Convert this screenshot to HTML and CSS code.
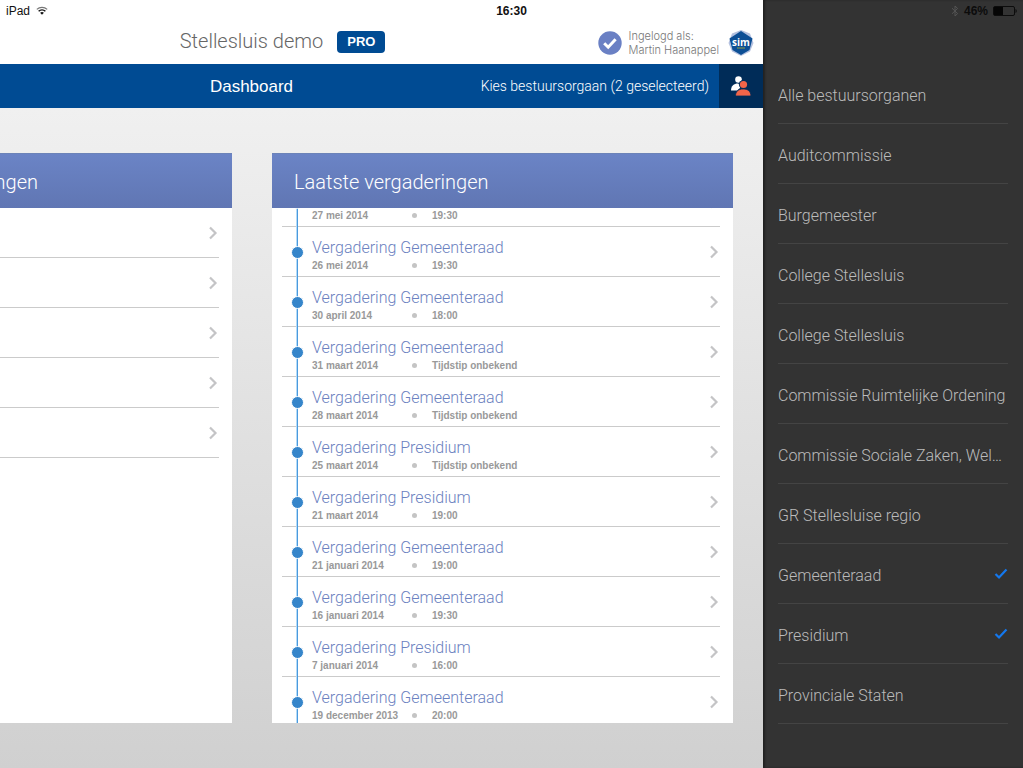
FILE: index.html
```html
<!DOCTYPE html>
<html lang="nl">
<head>
<meta charset="utf-8">
<title>Stellesluis demo – Dashboard</title>
<link rel="stylesheet" href="styles.css">
</head>
<body>
<svg width="0" height="0" class="sprite" aria-hidden="true">
  <symbol id="chevron" viewBox="0 0 10 14"><path d="M2 1.5 7.5 7 2 12.5" fill="none" stroke="#c4c4c6" stroke-width="2.2"/></symbol>
</svg>
<div class="statusbar">
  <span class="device">iPad
    <svg width="12" height="9" viewBox="0 0 12 9" fill="none" stroke="#111"><path d="M.8 3.4a7.6 7.6 0 0 1 10.4 0" stroke-width="1.2" stroke="#777"/><path d="M2.6 5.3a5 5 0 0 1 6.8 0" stroke-width="1.5"/><path d="M6 8.8 4.1 6.8a2.8 2.8 0 0 1 3.8 0z" fill="#111" stroke="none"/></svg>
  </span>
  <span class="clock">16:30</span>
  <span class="power">
    <svg width="8" height="12" viewBox="0 0 8 12" fill="none" stroke="#555" stroke-width="1"><path d="M1 3.2 6.6 8.6 4 11V1l2.6 2.4L1 8.8"/></svg>
    46%
    <svg width="24" height="10" viewBox="0 0 24 10"><rect x=".5" y=".5" width="21" height="9" rx="1.5" fill="none" stroke="#0c0c0c"/><path d="M1 1h9v8H1z" fill="#050505"/><path d="M22.5 3c1.6.6 1.6 3.4 0 4z" fill="#0c0c0c"/></svg>
  </span>
</div>
<div class="app">
  <div class="viewport">
    <div class="view">
      <header class="header">
        <span></span>
        <h1 class="title">Stellesluis demo</h1>
        <div class="header-end">
          <span class="badge">PRO</span>
          <div class="user">
            <svg width="24" height="24" viewBox="0 0 24 24"><circle cx="12" cy="12" r="11.7" fill="#6a80c4"/><path d="m6.2 12.2 4 4 7.4-8" fill="none" stroke="#fff" stroke-width="3"/></svg>
            <p class="user-name">Ingelogd als:<br>Martin Haanappel</p>
            <svg class="logo" width="26" height="26" viewBox="0 0 26 26"><path d="m13 0 9 3.5L25.500 13 22 21.500 13 26 4 21.500.5 13 4 3.500z" fill="#b3c0df"/><path d="M13 1 24.500 8.500 21.500 20 13 25 4.500 20 1.500 8.500z" fill="#0d4f95"/><path d="M9 18h8" stroke="#8fa04a"/><text x="13" y="15.500" text-anchor="middle" class="logo-text">sim</text></svg>
          </div>
        </div>
      </header>
      <nav class="nav">
        <span></span>
        <h2 class="nav-title">Dashboard</h2>
        <div class="nav-end">
          <button class="choose" type="button">Kies bestuursorgaan (2 geselecteerd)</button>
          <button class="people" type="button" aria-label="Bestuursorganen">
            <svg width="22" height="22" viewBox="0 0 22 22"><circle cx="8.500" cy="4.500" r="3.300" fill="#fff"/><path d="M1 15.500c0-4.500 3-7 7-7l2.500 1.500-.5 3-3 2.500z" fill="#fff"/><circle cx="13.500" cy="9.500" r="4.600" fill="#002c58"/><circle cx="13.500" cy="9.500" r="3.600" fill="#f26549"/><path d="M5.500 21c0-4.500 2.800-7 7.700-7s7.700 2.500 7.700 7z" fill="#f26549" stroke="#002c58" stroke-width=".8"/></svg>
          </button>
        </div>
      </nav>
      <main class="panels">
        <section class="panel">
          <h3 class="panel-title">Aankomende vergaderingen</h3>
          <ul class="list">
            <li><a class="row" href="#" aria-label="Vergadering 1"><svg class="chevron"><use href="#chevron"/></svg></a></li>
            <li><a class="row" href="#" aria-label="Vergadering 2"><svg class="chevron"><use href="#chevron"/></svg></a></li>
            <li><a class="row" href="#" aria-label="Vergadering 3"><svg class="chevron"><use href="#chevron"/></svg></a></li>
            <li><a class="row" href="#" aria-label="Vergadering 4"><svg class="chevron"><use href="#chevron"/></svg></a></li>
            <li><a class="row" href="#" aria-label="Vergadering 5"><svg class="chevron"><use href="#chevron"/></svg></a></li>
          </ul>
        </section>
        <section class="panel">
          <h3 class="panel-title">Laatste vergaderingen</h3>
          <ul class="list timeline">
            <li><a class="row" href="#"><span class="name">&nbsp;</span><span class="meta"><span class="date">27 mei 2014</span><span>19:30</span></span><svg class="chevron"><use href="#chevron"/></svg></a></li>
            <li><a class="row" href="#"><span class="name">Vergadering Gemeenteraad</span><span class="meta"><span class="date">26 mei 2014</span><span>19:30</span></span><svg class="chevron"><use href="#chevron"/></svg></a></li>
            <li><a class="row" href="#"><span class="name">Vergadering Gemeenteraad</span><span class="meta"><span class="date">30 april 2014</span><span>18:00</span></span><svg class="chevron"><use href="#chevron"/></svg></a></li>
            <li><a class="row" href="#"><span class="name">Vergadering Gemeenteraad</span><span class="meta"><span class="date">31 maart 2014</span><span>Tijdstip onbekend</span></span><svg class="chevron"><use href="#chevron"/></svg></a></li>
            <li><a class="row" href="#"><span class="name">Vergadering Gemeenteraad</span><span class="meta"><span class="date">28 maart 2014</span><span>Tijdstip onbekend</span></span><svg class="chevron"><use href="#chevron"/></svg></a></li>
            <li><a class="row" href="#"><span class="name">Vergadering Presidium</span><span class="meta"><span class="date">25 maart 2014</span><span>Tijdstip onbekend</span></span><svg class="chevron"><use href="#chevron"/></svg></a></li>
            <li><a class="row" href="#"><span class="name">Vergadering Presidium</span><span class="meta"><span class="date">21 maart 2014</span><span>19:00</span></span><svg class="chevron"><use href="#chevron"/></svg></a></li>
            <li><a class="row" href="#"><span class="name">Vergadering Gemeenteraad</span><span class="meta"><span class="date">21 januari 2014</span><span>19:00</span></span><svg class="chevron"><use href="#chevron"/></svg></a></li>
            <li><a class="row" href="#"><span class="name">Vergadering Gemeenteraad</span><span class="meta"><span class="date">16 januari 2014</span><span>19:30</span></span><svg class="chevron"><use href="#chevron"/></svg></a></li>
            <li><a class="row" href="#"><span class="name">Vergadering Presidium</span><span class="meta"><span class="date">7 januari 2014</span><span>16:00</span></span><svg class="chevron"><use href="#chevron"/></svg></a></li>
            <li><a class="row" href="#"><span class="name">Vergadering Gemeenteraad</span><span class="meta"><span class="date">19 december 2013</span><span>20:00</span></span><svg class="chevron"><use href="#chevron"/></svg></a></li>
          </ul>
        </section>
      </main>
    </div>
  </div>
  <aside class="drawer">
    <label class="option"><span>Alle bestuursorganen</span><input type="checkbox"></label>
    <label class="option"><span>Auditcommissie</span><input type="checkbox"></label>
    <label class="option"><span>Burgemeester</span><input type="checkbox"></label>
    <label class="option"><span>College Stellesluis</span><input type="checkbox"></label>
    <label class="option"><span>College Stellesluis</span><input type="checkbox"></label>
    <label class="option"><span>Commissie Ruimtelijke Ordening</span><input type="checkbox"></label>
    <label class="option"><span>Commissie Sociale Zaken, Wel…</span><input type="checkbox"></label>
    <label class="option"><span>GR Stellesluise regio</span><input type="checkbox"></label>
    <label class="option"><span>Gemeenteraad</span><input type="checkbox" checked></label>
    <label class="option"><span>Presidium</span><input type="checkbox" checked></label>
    <label class="option"><span>Provinciale Staten</span><input type="checkbox"></label>
  </aside>
</div>
</body>
</html>
```
FILE: styles.css
```css
:root {
  --drawer: 260px;
  --light: Roboto, "Liberation Sans", sans-serif;
  --regular: "Liberation Sans", Arial, sans-serif;
}
* { box-sizing: border-box; }
body {
  margin: 0;
  font-family: var(--light);
  font-weight: 300;
}
h1, h2, h3, p, ul { margin: 0; padding: 0; font-weight: 300; }
ul { list-style: none; }
a { color: inherit; text-decoration: none; }
button { border: 0; background: none; padding: 0; font: inherit; color: inherit; }
.sprite { position: absolute; }

.statusbar {
  position: absolute;
  z-index: 2;
  top: 0;
  left: 0;
  right: 0;
  height: 21px;
  padding: 0 6px;
  display: grid;
  grid-template-columns: 1fr auto 1fr;
  align-items: center;
  font: 400 12px/20px var(--regular);
  color: #111;
}
.clock { font-weight: 700; }
.device, .power { display: flex; align-items: center; gap: 6px; }
.power { justify-content: flex-end; gap: 5px; color: #0c0c0c; font-weight: 700; }

.app {
  display: grid;
  grid-template-columns: minmax(0, 1fr) var(--drawer);
  min-height: 100vh;
}
.viewport { display: flex; overflow: hidden; }
.view {
  flex: 1;
  margin-left: calc(-1 * var(--drawer));
  display: flex;
  flex-direction: column;
  background: linear-gradient(#f0f0f0 108px, #d0d0d0);
}
.header, .nav {
  display: grid;
  grid-template-columns: 1fr auto 1fr;
  align-items: center;
}
.header { height: 64px; padding-top: 20px; background: #fff; }
.title { padding-bottom: 2px; font-size: 20px; line-height: 24px; color: #666; }
.header-end { display: flex; align-items: center; justify-content: space-between; padding: 0 9px 0 14px; }
.badge {
  padding: 0 10px;
  border-radius: 4px;
  background: #004b93;
  color: #fff;
  font: 700 13px/22px var(--regular);
}
.user { display: flex; align-items: center; gap: 7px; padding-top: 2px; }
.user-name { font: 300 11px/14px Inter, sans-serif; color: #777; }
.logo { margin-left: 2px; }
.logo-text { font: 700 10px "Open Sans", sans-serif; fill: #fff; }

.nav { height: 44px; background: #004b93; color: #fff; }
.nav-title { padding-top: 2px; font: 400 17px/22px var(--regular); }
.nav-end { display: flex; justify-content: flex-end; align-self: stretch; align-items: stretch; gap: 10px; }
.choose { font-size: 14px; }
.people { display: flex; align-items: center; justify-content: center; width: 44px; background: #002c58; }

.panels {
  flex: 1;
  display: grid;
  grid-template-columns: 1fr 1fr;
  gap: 40px;
  padding: 45px 30px 45px 31px;
}
.panel { display: flex; flex-direction: column; overflow: hidden; background: #fff; }
.panel-title {
  position: relative;
  z-index: 1;
  padding: 3px 22px 0;
  font-size: 20px;
  line-height: 52px;
  color: #fff;
  background: linear-gradient(#6b84c6, #6076b3);
  box-shadow: inset 0 1px #6c83b8;
}
.list { padding: 0 13px 0 10px; }
.row {
  display: flex;
  flex-direction: column;
  justify-content: flex-end;
  position: relative;
  height: 50px;
  padding: 0 30px 4px 30px;
  border-bottom: 1px solid #cbcbcb;
}
.chevron { position: absolute; right: 1px; top: 18px; width: 10px; height: 14px; }
.name { font-size: 16px; line-height: 22px; color: #6b81c0; }
.meta { display: flex; font: 700 10px/13px var(--regular); color: #999; }
.date { display: flex; justify-content: space-between; align-items: center; width: 120px; padding-right: 15px; }
.date::after { content: ""; width: 5px; height: 5px; border-radius: 50%; background: #c4c4c4; }
.timeline { margin-top: -31px; flex: 1 1 0; overflow: hidden; }
.timeline .row::before {
  content: "";
  position: absolute;
  left: 14px;
  top: 0;
  bottom: -1px;
  width: 2px;
  background: linear-gradient(to right, #b4daf6 50%, #4a9ade 50%);
}
.timeline .row::after {
  content: "";
  position: absolute;
  left: 9px;
  top: 19px;
  width: 11px;
  height: 11px;
  border: 1px solid #fff;
  border-radius: 50%;
  background: #3585ca;
}

.drawer {
  padding: 64px 15px 0;
  background: #333;
  box-shadow: inset 2px 0 2px #222;
}
.option {
  display: flex;
  align-items: center;
  justify-content: space-between;
  height: 60px;
  border-bottom: 1px solid #444;
  font-size: 16px;
  color: #bbb;
}
.option span { padding-top: 4px; overflow: hidden; white-space: nowrap; text-overflow: ellipsis; }
.option input { appearance: none; width: 0; height: 12px; margin: 0; }
.option input:checked {
  width: 14px;
  background: url("data:image/svg+xml,%3Csvg xmlns='http://www.w3.org/2000/svg' viewBox='0 0 14 12'%3E%3Cpath d='M1.500 6 5 9.500 12.500 1.500' fill='none' stroke='%231478ee' stroke-width='2.200'/%3E%3C/svg%3E") center no-repeat;
}
```
